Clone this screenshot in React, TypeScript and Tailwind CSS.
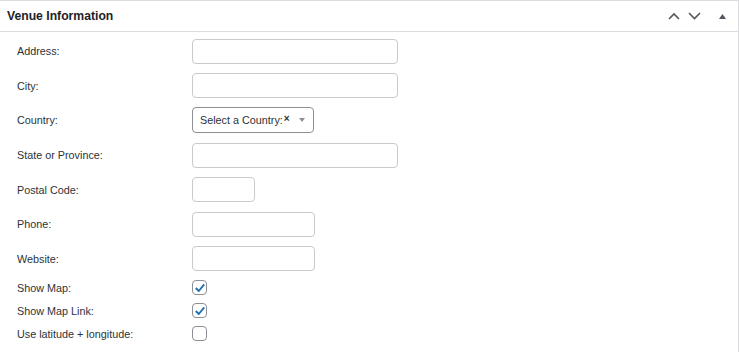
const fields = [
  { label: "Address:", kind: "text", width: "w-[206px]" },
  { label: "City:", kind: "text", width: "w-[206px]" },
  { label: "Country:", kind: "select", width: "w-[122px]" },
  { label: "State or Province:", kind: "text", width: "w-[206px]" },
  { label: "Postal Code:", kind: "text", width: "w-[63px]" },
  { label: "Phone:", kind: "text", width: "w-[123px]" },
  { label: "Website:", kind: "text", width: "w-[123px]" },
];

const checks = [
  { label: "Show Map:", checked: true },
  { label: "Show Map Link:", checked: true },
  { label: "Use latitude + longitude:", checked: false },
];

const Check = ({ checked }: { checked: boolean }) => (
  <div className="w-[15px] h-[15px] rounded-[4px] border border-[#8c8f94] bg-white flex items-center justify-center">
    {checked && (
      <svg width="12" height="12" viewBox="0 0 20 20">
        <path d="M3 10 L8 15 L17 4" fill="none" stroke="#2271b1" strokeWidth="3.2" strokeLinejoin="round" />
      </svg>
    )}
  </div>
);

export default function App() {
  return (
    <div className="w-[739px] h-[352px] bg-white overflow-hidden font-['Liberation_Sans',Arial,sans-serif]">
      <div className="border-r border-[#dcdcde] h-full">
        <div className="h-[32px] border-t border-b border-[#dcdcde] flex items-center justify-between pl-[7px] pr-[12px]">
          <h2 className="text-[12.2px] font-bold text-[#1d2327]">Venue Information</h2>
          <div className="flex items-center text-[#50575e]">
            <svg width="12" height="8" viewBox="0 0 12 8" className="mr-[8px]">
              <path d="M1 7 L6 2 L11 7" fill="none" stroke="#50575e" strokeWidth="1.6" />
            </svg>
            <svg width="13" height="8" viewBox="0 0 13 8" className="mr-[18px]">
              <path d="M1 1 L6.5 6.5 L12 1" fill="none" stroke="#50575e" strokeWidth="1.6" />
            </svg>
            <svg width="7" height="5" viewBox="0 0 7 5">
              <path d="M0 5 L3.5 0 L7 5 Z" fill="#50575e" />
            </svg>
          </div>
        </div>
        <div className="pt-[2px] pl-[17px] text-[10.8px] text-[#2c3338]">
          {fields.map((f) => (
            <div key={f.label} className="h-[34.6px] flex items-center">
              <div className="w-[175px]">{f.label}</div>
              {f.kind === "text" ? (
                <div className={`${f.width} h-[25px] rounded-[4px] border border-[#c9cacc] bg-white`} />
              ) : (
                <div className={`${f.width} h-[26px] rounded-[4px] border border-[#8c8f94] bg-white flex items-center pl-[7px] pr-[8px]`}>
                  <span className="text-[#2c3338]">Select a Country:</span>
                  <span className="text-[10px] font-bold -mt-[4px] ml-[1px]">×</span>
                  <svg width="6" height="4" viewBox="0 0 6 4" className="ml-auto">
                    <path d="M0 0 L6 0 L3 4 Z" fill="#8c8f94" />
                  </svg>
                </div>
              )}
            </div>
          ))}
          {checks.map((c) => (
            <div key={c.label} className="h-[23px] flex items-center">
              <div className="w-[175px]">{c.label}</div>
              <Check checked={c.checked} />
            </div>
          ))}
        </div>
      </div>
    </div>
  );
}
